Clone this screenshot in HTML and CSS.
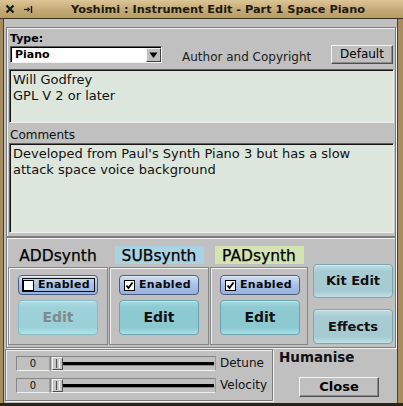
FILE: index.html
```html
<!DOCTYPE html>
<html>
<head>
<meta charset="utf-8">
<link rel="stylesheet" href="styles.css">
</head>
<body>
<div class="window">
  <div class="titlebar">
    <svg class="ticon close-x" width="10" height="10" viewBox="0 0 10 10"><path d="M1.5 1.5 L8.5 8.5 M8.5 1.5 L1.5 8.5" stroke="#1a1a1a" stroke-width="2.2" fill="none"/></svg>
    <svg class="ticon pin" width="9" height="9" viewBox="0 0 9 9"><path d="M0 4.5 H5" stroke="#1a1a1a" stroke-width="1.2"/><path d="M3.5 2 L6.5 4.5 L3.5 7 Z" fill="#1a1a1a"/><path d="M7.5 1 V8" stroke="#1a1a1a" stroke-width="1.4"/></svg>
    <div class="title">Yoshimi : Instrument Edit - Part 1 Space Piano</div>
  </div>
  <div class="client">
    <div class="group g1">
      <div class="type-lbl">Type:</div>
      <div class="row1">
        <div class="choice">
          <span class="choice-val">Piano</span>
          <span class="choice-btn"><svg width="9" height="7" viewBox="0 0 9 7"><path d="M0.5 0.5 H8.5 L4.5 6 Z" fill="#000"/></svg></span>
        </div>
        <div class="author-lbl">Author and Copyright</div>
        <div class="btn-flat default">Default</div>
      </div>
      <div class="textbox author">Will Godfrey<br>GPL V 2 or later</div>
      <div class="comments-lbl">Comments</div>
      <div class="textbox comments">Developed from Paul's Synth Piano 3 but has a slow attack space voice background</div>
    </div>

    <div class="group g2">
      <div class="engines">
        <div class="eng-title">ADDsynth</div>
        <div class="eng-title sub">SUBsynth</div>
        <div class="eng-title pad">PADsynth</div>
        <div class="eng-box">
          <div class="enable">
            <div class="enable-focus">
              <span class="cb"></span><span class="en-txt">Enabled</span>
            </div>
          </div>
          <div class="edit disabled">Edit</div>
        </div>
        <div class="eng-box">
          <div class="enable">
            <div class="enable-in">
              <span class="cb"><svg width="9" height="9" viewBox="0 0 9 9"><path d="M1.5 4.5 L3.5 7 L7.5 1.5" stroke="#000" stroke-width="1.8" fill="none"/></svg></span><span class="en-txt">Enabled</span>
            </div>
          </div>
          <div class="edit">Edit</div>
        </div>
        <div class="eng-box">
          <div class="enable">
            <div class="enable-in">
              <span class="cb"><svg width="9" height="9" viewBox="0 0 9 9"><path d="M1.5 4.5 L3.5 7 L7.5 1.5" stroke="#000" stroke-width="1.8" fill="none"/></svg></span><span class="en-txt">Enabled</span>
            </div>
          </div>
          <div class="edit">Edit</div>
        </div>
      </div>
      <div class="kit-col">
        <div class="kbtn kit">Kit Edit</div>
        <div class="kbtn effects">Effects</div>
      </div>
    </div>

    <div class="bottom">
      <div class="group g3">
        <div class="srow">
          <div class="valbox">0</div>
          <div class="slider"><span class="thumb"></span></div>
          <div class="slbl">Detune</div>
        </div>
        <div class="srow">
          <div class="valbox">0</div>
          <div class="slider"><span class="thumb"></span></div>
          <div class="slbl">Velocity</div>
        </div>
      </div>
      <div class="hum-col">
        <div class="humanise">Humanise</div>
        <div class="btn-flat closebtn">Close</div>
      </div>
    </div>
  </div>
</div>
</body>
</html>
```

FILE: styles.css
```css
* { box-sizing: border-box; }
html, body { margin: 0; padding: 0; }
body {
  width: 403px;
  height: 406px;
  overflow: hidden;
  background: #a68c5e;
  font-family: "DejaVu Sans", sans-serif;
  color: #000;
}
.window {
  width: 403px;
  height: 406px;
  display: flex;
  flex-direction: column;
  background: #a68c5e;
  border-bottom: 3px solid #2a2418;
}
.titlebar {
  height: 19px;
  flex: none;
  display: flex;
  align-items: center;
  background: linear-gradient(#dcc596, #c2a873 60%, #b89c66);
  border-bottom: 1px solid #3a3222;
}
.ticon { flex: none; display: block; }
.close-x { margin-left: 5px; }
.pin { margin-left: 9px; }
.title {
  flex: 1;
  text-align: center;
  font-weight: bold;
  font-size: 11.3px;
  color: #1e1a12;
  white-space: nowrap;
}
.client {
  flex: 1;
  margin-left: 3px;
  width: 395px;
  background: #c0c0c0;
  border-left: 1px solid #4a3f2c;
  border-right: 1px solid #4a3f2c;
  display: flex;
  flex-direction: column;
}
.group {
  border: 1px solid #7c7c7c;
  box-shadow: inset 1px 1px 0 #f2f2f2, 1px 1px 0 #f2f2f2;
}
.g1 {
  margin: 8px 0 0 2px;
  width: 390px;
  height: 210px;
  padding: 4px 0 0 0;
}
.type-lbl {
  margin-left: 3px;
  font-size: 11px;
  font-weight: bold;
  line-height: 13px;
}
.row1 {
  display: flex;
  align-items: flex-start;
  height: 19px;
}
.choice {
  margin: 1px 0 0 3px;
  width: 152px;
  height: 17px;
  background: #fff;
  border: 1px solid;
  border-color: #5a5a5a #f4f4f4 #f4f4f4 #5a5a5a;
  box-shadow: inset 1px 1px 0 #000;
  display: flex;
  align-items: stretch;
}
.choice-val {
  flex: 1;
  font-size: 11px;
  font-weight: bold;
  line-height: 15px;
  padding-left: 4px;
}
.choice-btn {
  width: 15px;
  margin: 1px 0 0 0;
  background: #c0c0c0;
  border: 1px solid;
  border-color: #f4f4f4 #404040 #404040 #f4f4f4;
  display: flex;
  align-items: center;
  justify-content: center;
}
.author-lbl {
  margin-left: 20px;
  padding-top: 3px;
  font-size: 12px;
  line-height: 19px;
  color: #202020;
}
.btn-flat {
  background: #c0c0c0;
  border: 1px solid;
  border-color: #f4f4f4 #505050 #505050 #f4f4f4;
  box-shadow: inset -1px -1px 0 #8a8a8a;
  text-align: center;
}
.default {
  margin-left: auto;
  margin-right: 2px;
  width: 62px;
  height: 19px;
  font-size: 12px;
  line-height: 17px;
}
.textbox {
  margin-left: 2px;
  width: 385px;
  background: #dde6dc;
  border: 1px solid;
  border-color: #606060 #f0f0f0 #f0f0f0 #606060;
  box-shadow: inset 1px 1px 0 #141414;
  font-size: 13px;
  line-height: 16px;
  padding: 2px 2px 0 3px;
  color: #111;
}
.author {
  margin-top: 5px;
  height: 54px;
}
.comments-lbl {
  margin: 5px 0 0 3px;
  font-size: 12px;
  line-height: 14px;
  color: #111;
}
.comments {
  margin-top: 1px;
  height: 90px;
}
.g2 {
  margin: 0 0 0 2px;
  width: 390px;
  height: 111px;
  display: flex;
  align-items: flex-start;
  padding: 8px 0 0 1px;
}
.engines {
  display: grid;
  grid-template-columns: 100px 100px 98px;
  grid-template-rows: 18px 78px;
  column-gap: 1px;
  row-gap: 3px;
}
.eng-title {
  justify-self: center;
  width: 89px;
  height: 18px;
  font-size: 15.5px;
  line-height: 20px;
  text-align: center;
  color: #000;
  -webkit-text-stroke: 0.25px #000;
}
.eng-title.sub { background: #a9d3e3; }
.eng-title.pad { background: #d3e4b2; }
.eng-box {
  border: 1px solid #858585;
  box-shadow: inset 1px 1px 0 #f0f0f0;
  padding: 7px 0 0 9px;
  display: flex;
  flex-direction: column;
  gap: 5px;
}
.enable {
  width: 80px;
  height: 20px;
  border: 1px solid #4c5c82;
  border-radius: 4px;
  background: linear-gradient(#cfdef4, #a9c1e6 50%, #97b2dc);
  box-shadow: inset 0 1px 0 #e4eefa;
  padding: 2px 0 0 4px;
}
.enable-focus, .enable-in {
  display: flex;
  align-items: center;
  height: 14px;
  width: 73px;
}
.enable-focus {
  border: 1px solid #101010;
  margin-left: -1px;
}
.cb {
  width: 11px;
  height: 11px;
  flex: none;
  background: #fff;
  border: 1px solid #000;
  display: flex;
  align-items: center;
  justify-content: center;
}
.en-txt {
  margin-left: 4px;
  font-size: 11px;
  font-weight: bold;
  line-height: 14px;
  letter-spacing: 0.3px;
  color: #0a0a0a;
}
.edit {
  width: 80px;
  height: 35px;
  border: 1px solid #6aa4ae;
  border-radius: 4px;
  background: linear-gradient(#a6d8de, #8ecad2 20%, #8cc8d0 80%, #a8e0e8);
  box-shadow: inset 0 1px 0 #c4eaf0;
  font-size: 14px;
  font-weight: bold;
  line-height: 33px;
  text-align: center;
  color: #111;
}
.edit.disabled {
  border-color: #86bcc4;
  background: linear-gradient(#b0dce2, #9ed2da 20%, #9cd0d8 80%, #b2e4ea);
  color: #7e8a8c;
}
.kit-col {
  margin-left: 5px;
  margin-top: 18px;
  display: flex;
  flex-direction: column;
  gap: 11px;
}
.kbtn {
  width: 80px;
  border: 1px solid #7ea6ae;
  border-radius: 4px;
  background: linear-gradient(#bcdce2, #a8ccd4 20%, #a6cad2 80%, #bde0e6);
  box-shadow: inset 0 1px 0 #d2eaee;
  font-size: 13px;
  font-weight: bold;
  text-align: center;
  color: #111;
}
.kit { height: 34px; line-height: 32px; }
.effects { height: 35px; line-height: 33px; }
.bottom {
  display: flex;
  align-items: flex-start;
  margin-top: 1px;
}
.g3 {
  margin-left: 1px;
  width: 268px;
  height: 52px;
  padding: 6px 0 0 10px;
  display: flex;
  flex-direction: column;
  gap: 7px;
}
.srow {
  display: flex;
  align-items: center;
  height: 15px;
}
.valbox {
  width: 34px;
  height: 15px;
  border: 1px solid;
  border-color: #868686 #9a9a9a #f0f0f0 #868686;
  font-size: 10px;
  line-height: 13px;
  text-align: center;
  color: #111;
}
.slider {
  position: relative;
  width: 166px;
  height: 15px;
  border: 1px solid;
  border-color: #868686 #9a9a9a #f0f0f0 #868686;
}
.slider::before {
  content: "";
  position: absolute;
  left: 12px;
  right: 1px;
  top: 5px;
  height: 3px;
  background: #000;
  box-shadow: 0 1px 0 #8a8a8a;
}
.thumb {
  position: absolute;
  left: 1px;
  top: 0;
  width: 11px;
  height: 13px;
  background: #c4c4c4;
  border: 1px solid;
  border-color: #f4f4f4 #505050 #505050 #f4f4f4;
}
.thumb::after {
  content: "";
  position: absolute;
  left: 3px;
  top: 1px;
  width: 2px;
  height: 9px;
  border-left: 1px solid #505050;
  border-right: 1px solid #fff;
}
.slbl {
  margin-left: 4px;
  font-size: 12px;
  line-height: 15px;
  color: #111;
}
.hum-col {
  margin-left: 6px;
  display: flex;
  flex-direction: column;
}
.humanise {
  font-size: 13.5px;
  font-weight: bold;
  line-height: 16px;
  color: #111;
}
.closebtn {
  margin: 12px 0 0 20px;
  width: 80px;
  height: 20px;
  font-size: 13px;
  font-weight: bold;
  line-height: 18px;
}
```
